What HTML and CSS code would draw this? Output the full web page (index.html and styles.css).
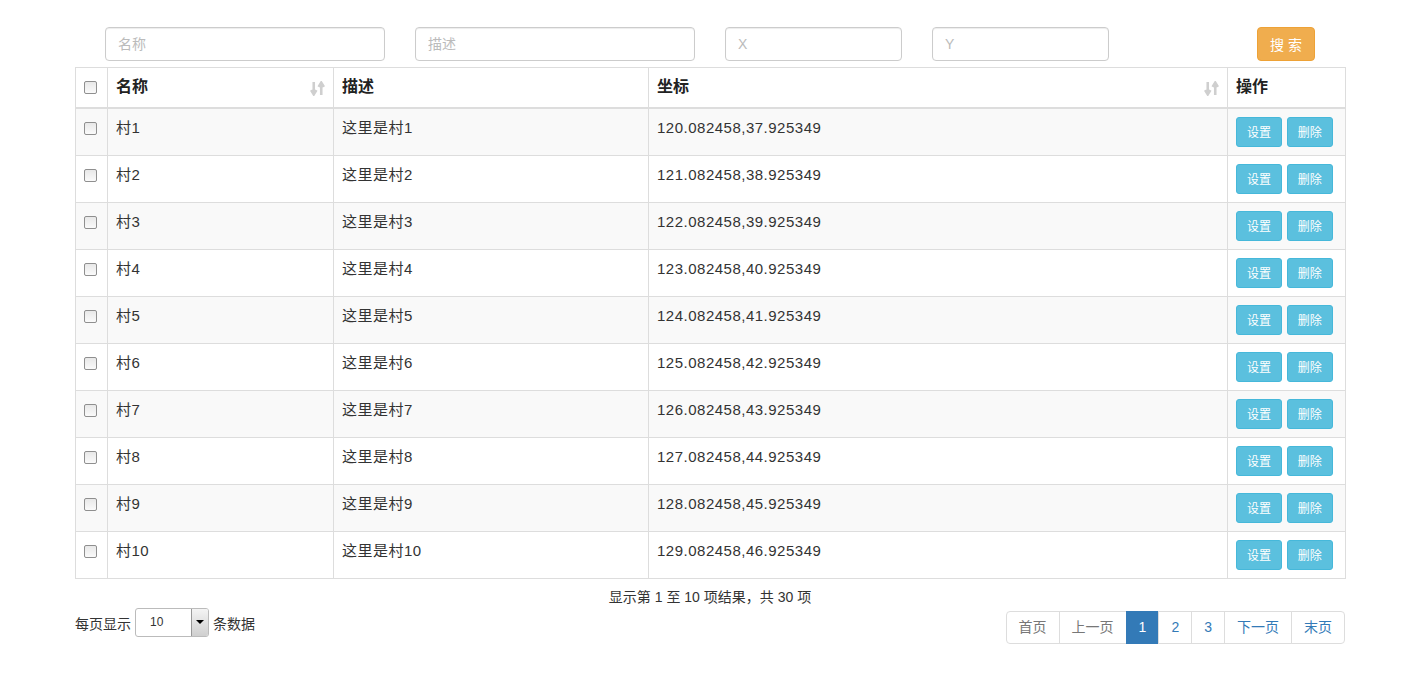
FILE: index.html
```html
<!DOCTYPE html>
<html lang="zh-CN">
<head>
<meta charset="UTF-8">
<title>村列表</title>
<link rel="stylesheet" href="styles.css">
</head>
<body>

<div class="wrap">
  <!-- 搜索条件 -->
  <div class="search-bar">
    <input type="text" class="search-input wide" placeholder="名称">
    <input type="text" class="search-input wide" placeholder="描述">
    <input type="text" class="search-input narrow" placeholder="X">
    <input type="text" class="search-input narrow" placeholder="Y">
    <button class="btn-search">搜 索</button>
  </div>

  <table class="data-table">
    <thead>
      <tr>
        <th class="col-check"><span class="checkbox"></span></th>
        <th class="col-name sortable">名称 <svg class="sort-icon" viewBox="0 0 14 14"><path d="M3.5 1v11M1 8.5L3.5 12.5 6 8.5" /><path d="M10.5 13V2M8 5.5L10.5 1.5 13 5.5" /></svg></th>
        <th class="col-desc">描述</th>
        <th class="col-coord sortable">坐标 <svg class="sort-icon" viewBox="0 0 14 14"><path d="M3.5 1v11M1 8.5L3.5 12.5 6 8.5" /><path d="M10.5 13V2M8 5.5L10.5 1.5 13 5.5" /></svg></th>
        <th class="col-op">操作</th>
      </tr>
    </thead>
    <tbody id="rows"></tbody>
  </table>

  <div class="table-info">显示第 1 至 10 项结果，共 30 项</div>

  <div class="table-footer">
    <div class="page-size">
      每页显示
      <div class="fake-select"><span class="val">10</span><span class="arrow"></span></div>
      条数据
    </div>
    <ul class="pagination">
      <li class="disabled">首页</li>
      <li class="disabled">上一页</li>
      <li class="active">1</li>
      <li>2</li>
      <li>3</li>
      <li>下一页</li>
      <li>末页</li>
    </ul>
  </div>
</div>

<script>
  const tbody = document.getElementById('rows');
  for (let i = 1; i <= 10; i++) {
    const tr = document.createElement('tr');
    tr.innerHTML = `
      <td><span class="checkbox"></span></td>
      <td>村${i}</td>
      <td>这里是村${i}</td>
      <td>${119 + i}.082458,${36 + i}.925349</td>
      <td><button class="btn-info">设置</button> <button class="btn-info">删除</button></td>`;
    tbody.appendChild(tr);
  }
</script>

</body>
</html>
```

FILE: styles.css
```css
* { box-sizing: border-box; }
body { margin: 0; font-family: 'Liberation Sans', 'Noto Sans CJK SC', sans-serif; color: #333; background: #fff; font-size: 14px; }
.wrap { width: 1270px; margin-left: 75px; padding-top: 27px; }

.search-bar { display: flex; gap: 30px; padding-left: 30px; padding-right: 30px; }
.search-input { height: 34px; border: 1px solid #ccc; border-radius: 4px; padding: 6px 12px; font-size: 14px; font-family: inherit; color: #555; box-shadow: inset 0 1px 1px rgba(0,0,0,.075); }
.search-input::placeholder { color: #bbb; }
.search-input.wide { width: 280px; }
.search-input.narrow { width: 177px; }
.btn-search { margin-left: auto; width: 58px; height: 34px; background: #f0ad4e; border: 1px solid #eea236; border-radius: 4px; color: #fff; font-size: 14px; font-family: inherit; padding: 0; }

.data-table { width: 1270px; margin-top: 6px; border-collapse: collapse; table-layout: fixed; }
.data-table th, .data-table td { border: 1px solid #ddd; padding: 8px; text-align: left; vertical-align: top; line-height: 1.42857; }
.data-table th { font-size: 16px; font-weight: bold; color: #222; border-bottom: 2px solid #ddd; vertical-align: bottom; height: 40px; padding-bottom: 8px; }
.data-table td { font-size: 15px; height: 47px; letter-spacing: 0.5px; }
.data-table tbody tr:nth-child(odd) { background: #f9f9f9; }
.col-check { width: 32px; }
.col-name { width: 226px; }
.col-desc { width: 315px; }
.col-coord { width: 579px; }
.col-op { width: 118px; }
.sortable { position: relative; }
.sort-icon { position: absolute; right: 8px; top: 13px; width: 15px; height: 15px; fill: none; stroke: #cfcfcf; stroke-width: 2.4; }

.checkbox { display: inline-block; width: 13px; height: 13px; border: 1px solid #8f8f8f; border-radius: 2px; background: linear-gradient(#e8e8e8, #fafafa); vertical-align: middle; }
.data-table th .checkbox { margin-bottom: 1px; }
.data-table td .checkbox { margin-top: -3px; }
.data-table td:first-child { padding-top: 9px; }

.btn-info { height: 30px; padding: 0 10px; font-size: 12px; font-family: inherit; letter-spacing: 0; color: #fff; background: #5bc0de; border: 1px solid #46b8da; border-radius: 3px; }

.table-info { text-align: center; font-size: 14px; margin-top: 9px; line-height: 18px; }

.table-footer { display: flex; justify-content: space-between; align-items: flex-start; margin-top: 2px; }
.page-size { display: flex; align-items: center; gap: 4px; font-size: 14px; height: 30px; }
.fake-select { display: flex; width: 74px; height: 29px; border: 1px solid #bbb; border-radius: 3px; background: #fff; overflow: hidden; font-size: 12px; }
.fake-select .val { flex: 1; padding-left: 14px; line-height: 27px; color: #333; }
.fake-select .arrow { width: 17px; border-left: 1px solid #999; background: linear-gradient(#f4f4f4, #cfcfcf); position: relative; }
.fake-select .arrow::after { content: ''; position: absolute; left: 4px; top: 11px; border-left: 4px solid transparent; border-right: 4px solid transparent; border-top: 4px solid #000; }

.pagination { display: flex; list-style: none; margin: 3px 0 0; padding: 0; }
.pagination li { height: 33px; line-height: 31px; padding: 0 12px; border: 1px solid #ddd; margin-left: -1px; color: #337ab7; font-size: 14px; background: #fff; }
.pagination li:first-child { border-radius: 4px 0 0 4px; margin-left: 0; }
.pagination li:last-child { border-radius: 0 4px 4px 0; }
.pagination li.disabled { color: #777; }
.pagination li.active { background: #337ab7; border-color: #337ab7; color: #fff; }
```
